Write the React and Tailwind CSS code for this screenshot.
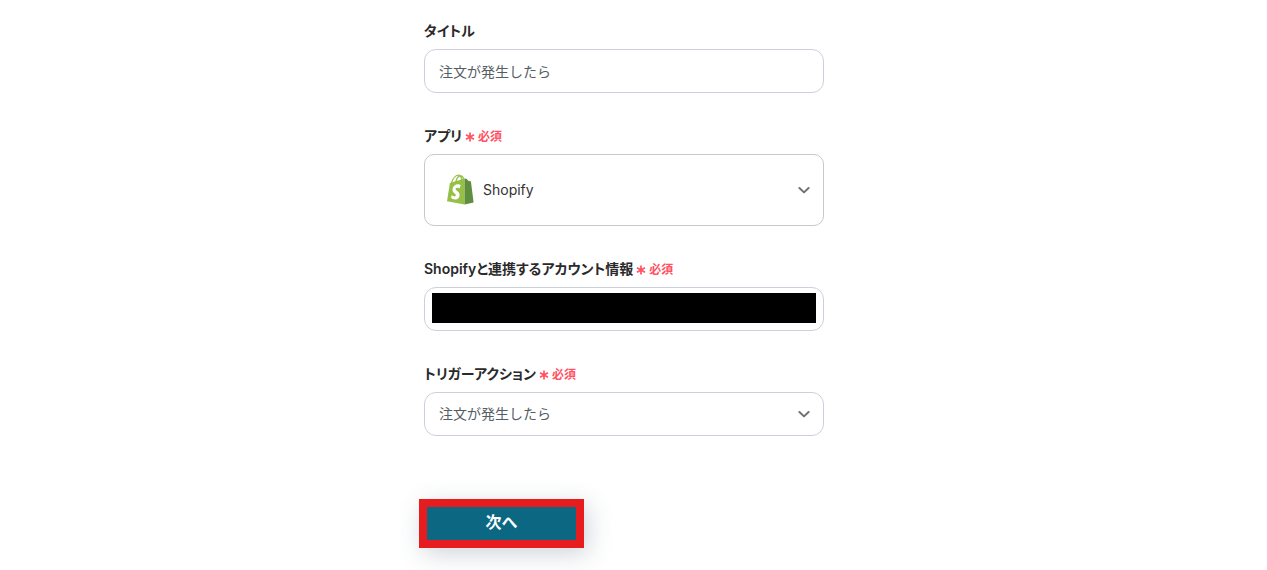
import React, { useState } from 'react';

const Chevron = () => (
  <svg className="pointer-events-none absolute right-[14px] top-1/2 -mt-1 w-3 h-2" viewBox="0 0 12 8" fill="none" stroke="#717171" strokeWidth="2" strokeLinecap="round" strokeLinejoin="round" aria-hidden="true">
    <path d="M1.4 2L6 6.4 10.6 2" />
  </svg>
);

const ShopifyIcon = () => (
  <svg className="pointer-events-none absolute left-[22px] top-5 w-[28px] h-[31px]" viewBox="0 0 28 31" aria-hidden="true">
    <path d="M5.6 9C6.6 4.8 9.4 1.4 12.4 1.2c2.2-.1 3.2 2 3.3 5.4M9.8 8c.6-3.2 2.6-6 5-6.2 1.6-.1 2.4 1.4 2.9 3.6" fill="none" stroke="#95bf47" strokeWidth="1.3" />
    <path d="M3.9 8.9L18.6 4.6V30.6L1 27.3z" fill="#95bf47" />
    <path d="M18.6 4.6l1.8.2 2.2 2.2 2.3.2 2.7 21.4-9 2z" fill="#5e8e3e" />
    <path d="M14.7 11.1l-1.1 3.3s-1-.6-2.2-.6c-1.7 0-1.8 1.1-1.8 1.4 0 1.5 4 2.1 4 5.7 0 2.8-1.8 4.6-4.2 4.6-2.9 0-4.4-1.8-4.4-1.8l.8-2.6s1.5 1.3 2.8 1.3c.8 0 1.2-.7 1.2-1.2 0-2-3.3-2.1-3.3-5.4 0-2.8 2-5.5 6-5.5 1.5 0 2.2.8 2.2.8z" fill="#fff" />
  </svg>
);

const Field = ({ id, label, required, children }) => (
  <div>
    <label htmlFor={id} className="flex items-center h-5 mb-2 text-sm font-semibold text-[#2a2a2a] [font-feature-settings:'palt']">
      {label}
      {required && (
        <span className="flex items-center gap-[3px] ml-[3px] mt-[2px] text-xs font-semibold text-[#ff5263]">
          <svg className="w-[10px] h-[10px]" viewBox="0 0 10 10" stroke="currentColor" strokeWidth="1.7" aria-hidden="true">
            <path d="M5 .5v9M1 2.7l8 4.6M9 2.7L1 7.3" />
          </svg>
          必須
        </span>
      )}
    </label>
    {children}
  </div>
);

const App = () => {
  const [title, setTitle] = useState('注文が発生したら');
  const [account, setAccount] = useState('');

  return (
    <div className="min-h-screen bg-white pt-[21px] pb-[22px] pr-[19px] font-['Inter','Noto_Sans_CJK_JP',sans-serif]">
      <form className="w-full max-w-[400px] mx-auto" onSubmit={(e) => e.preventDefault()}>
        <div className="flex flex-col gap-[33px]">
          <Field id="title" label="タイトル">
            <input id="title" type="text" value={title} onChange={(e) => setTitle(e.target.value)} className="block w-full h-11 px-[14px] text-sm text-[#555d65] bg-white border border-[#cbd0da] rounded-xl outline-none" />
          </Field>

          <Field id="app" label="アプリ" required>
            <div className="relative">
              <ShopifyIcon />
              <select id="app" className="block w-full h-[72px] pl-[58px] pr-10 text-sm text-[#333333] border border-[#c8c8c8] rounded-[10px] appearance-none outline-none">
                <option>Shopify</option>
              </select>
              <Chevron />
            </div>
          </Field>

          <Field id="account" label="Shopifyと連携するアカウント情報" required>
            <div className="h-11 px-[7px] py-[5px] border border-[#cbd0da] rounded-xl">
              <input id="account" type="text" value={account} onChange={(e) => setAccount(e.target.value)} className="block w-full h-[30px] bg-black text-black outline-none" />
            </div>
          </Field>

          <Field id="trigger" label="トリガーアクション" required>
            <div className="relative">
              <select id="trigger" className="block w-full h-11 pl-[14px] pr-10 text-sm text-[#555d65] bg-white border border-[#cbd0da] rounded-xl appearance-none outline-none">
                <option>注文が発生したら</option>
              </select>
              <Chevron />
            </div>
          </Field>
        </div>

        <button type="submit" className="block w-[165px] h-[49px] mt-[63px] -ml-[5px] pb-1 text-base font-bold text-white bg-[#0b6782] border-8 border-[#e71c1e] shadow-[4px_6px_24px_rgba(60,80,100,0.24)]">
          次へ
        </button>
      </form>
    </div>
  );
};

export default App;
